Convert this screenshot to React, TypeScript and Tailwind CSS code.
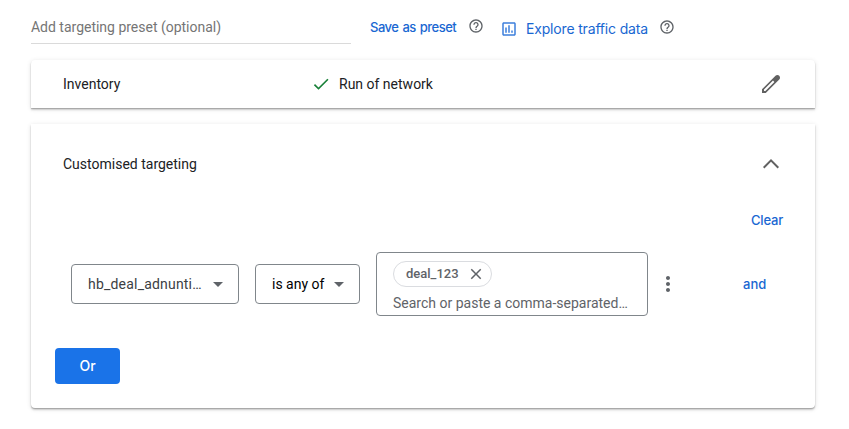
import type { ReactNode } from 'react';

const paths = {
  help: 'M11 18h2v-2h-2v2zm1-16C6.48 2 2 6.48 2 12s4.48 10 10 10 10-4.48 10-10S17.52 2 12 2zm0 18c-4.41 0-8-3.59-8-8s3.59-8 8-8 8 3.59 8 8-3.59 8-8 8zm0-14c-2.21 0-4 1.79-4 4h2c0-1.1.9-2 2-2s2 .9 2 2c0 2-3 1.75-3 5h2c0-2.25 3-2.5 3-5 0-2.21-1.79-4-4-4z',
  chart: 'M19 3H5c-1.1 0-2 .9-2 2v14c0 1.1.9 2 2 2h14c1.1 0 2-.9 2-2V5c0-1.1-.9-2-2-2zm0 16H5V5h14v14zM7 10h2v7H7zm4-3h2v10h-2zm4 7h2v3h-2z',
  check: 'M9 16.17L4.83 12l-1.42 1.41L9 19 21 7l-1.41-1.41z',
  edit: 'M16.5 3.75L3 17.25V21h3.75l13.5-13.5c1-1 1-2.700 0-3.750s-2.750-1-3.750 0zM14 8.600l1.400 1.400-9 9H5v-1.400z',
  up: 'M12 8l-8 8 1.41 1.41L12 10.83l6.59 6.58L20 16z',
  down: 'M7 10l5 5 5-5z',
  close: 'M19 6.41L17.59 5 12 10.59 6.41 5 5 6.41 10.59 12 5 17.59 6.41 19 12 13.41 17.59 19 19 17.59 13.41 12z',
  more: 'M12 8c1.1 0 2-.9 2-2s-.9-2-2-2-2 .9-2 2 .9 2 2 2zm0 2c-1.1 0-2 .9-2 2s.9 2 2 2 2-.9 2-2-.9-2-2-2zm0 6c-1.1 0-2 .9-2 2s.9 2 2 2 2-.9 2-2-.9-2-2-2z',
};

function Icon({ name, className }: { name: keyof typeof paths; className: string }) {
  return (
    <svg viewBox="0 0 24 24" fill="currentColor" fillRule="evenodd" className={`shrink-0 ${className}`}>
      <path d={paths[name]} />
    </svg>
  );
}

function Card({ className, children }: { className: string; children: ReactNode }) {
  return (
    <section
      className={`bg-white shadow-[0_2px_2px_0_rgba(0,0,0,0.14),0_1px_5px_0_rgba(0,0,0,0.12),0_1px_1px_0_rgba(0,0,0,0.2)] ${className}`}
    >
      {children}
    </section>
  );
}

export default function App() {
  return (
    <main className="h-[429px] w-[849px] overflow-hidden bg-white pl-[31px] pr-[34px] font-[Roboto,sans-serif] text-sm leading-5 whitespace-nowrap text-[#202124]">
      <header className="flex h-[60px] items-start">
        <div className="h-11 w-80 border-b border-[#dadada] pt-[17px] tracking-[-0.01px] text-[#757575]">
          Add targeting preset (optional)
        </div>
        <button className="mt-[17px] ml-[19px] w-[87px] text-left font-[Inter,sans-serif] text-[13px] leading-5 font-medium tracking-[-0.5px] [word-spacing:1px] text-[#1967d2]">
          Save as preset
        </button>
        <Icon name="help" className="mt-[18px] ml-[11px] size-4 text-[#5f6368]" />
        <button className="mt-[19px] ml-4 flex items-center gap-2 font-[Inter,sans-serif] text-sm text-[#1967d2]">
          <Icon name="chart" className="size-[18px] text-[#3c7fdc]" />
          <span className="w-[123px] text-left tracking-[-0.17px]">Explore traffic data</span>
        </button>
        <Icon name="help" className="mt-[19px] ml-[10px] size-4 text-[#5f6368]" />
      </header>

      <Card className="flex h-12 items-center rounded-t pr-8 pl-8">
        <span className="w-[248px]">Inventory</span>
        <Icon name="check" className="size-5 text-[#188038]" />
        <span className="ml-2 flex-1">Run of network</span>
        <Icon name="edit" className="size-6 text-[#616161]" />
      </Card>

      <Card className="mt-4 h-[284px] rounded-b">
        <div className="flex h-20 items-center justify-between px-8">
          <span>Customised targeting</span>
          <Icon name="up" className="mb-[2px] size-6 text-[#616161]" />
        </div>
        <div className="flex h-8 items-center justify-end pr-8">
          <button className="font-[Inter,sans-serif] text-[13px] font-medium tracking-[-0.2px] text-[#1967d2]">
            Clear
          </button>
        </div>
        <div className="mt-4 flex h-16 items-center pl-10">
          <div className="flex h-10 w-[168px] items-center rounded border border-[#80868b] pl-4 text-[#3c4043]">
            <span className="w-[118px] tracking-[0.2px]">hb_deal_adnunti…</span>
            <Icon name="down" className="size-6 text-[#5f6368]" />
          </div>
          <div className="ml-4 flex h-10 w-[105px] items-center rounded border border-[#80868b] pl-4 text-black">
            <span className="w-[55px]">is any of</span>
            <Icon name="down" className="size-6 text-[#5f6368]" />
          </div>
          <div className="ml-4 h-16 w-[272px] rounded border border-[#80868b] pt-2 pl-4 text-[#5f6368]">
            <div className="flex h-[26px] w-[99px] items-center rounded-full border border-[#dadce0] pl-3">
              <span className="w-[61px] text-[13px] font-medium">deal_123</span>
              <Icon name="close" className="size-[18px]" />
            </div>
            <div className="mt-[6px]">Search or paste a comma-separated…</div>
          </div>
          <Icon name="more" className="ml-2 size-6 text-[#5f6368]" />
          <button className="ml-[63px] font-[Inter,sans-serif] text-[13px] font-medium text-[#1967d2]">and</button>
        </div>
        <button className="mt-8 ml-6 h-9 w-[65px] rounded bg-[#1a73e8] text-center font-[Inter,sans-serif] text-sm font-medium text-white">
          Or
        </button>
      </Card>
    </main>
  );
}
